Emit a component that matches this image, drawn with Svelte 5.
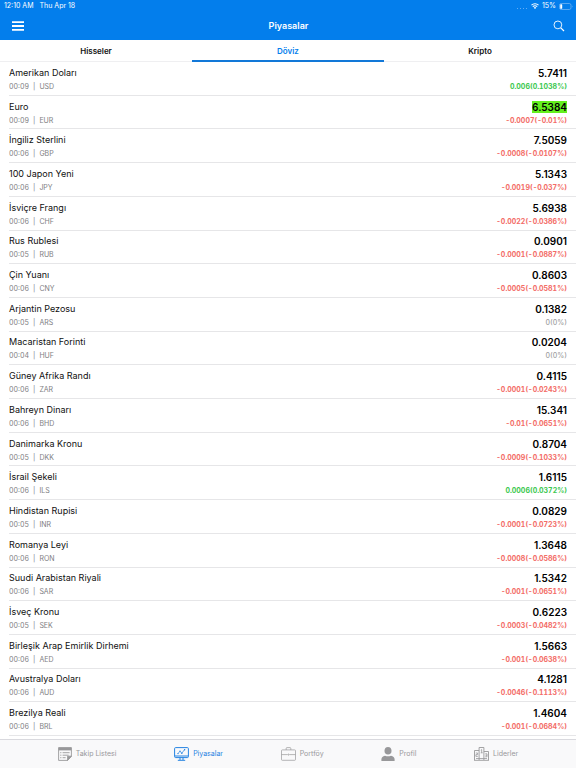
<script>
  const tabs = ['Hisseler', 'Döviz', 'Kripto'];
  let active = $state('Döviz');

  const rows = [
    ['Amerikan Doları', '00:09', 'USD', '5.7411', '0.006(0.1038%)', 'up'],
    ['Euro', '00:09', 'EUR', '6.5384', '-0.0007(-0.01%)', 'down', true],
    ['İngiliz Sterlini', '00:06', 'GBP', '7.5059', '-0.0008(-0.0107%)', 'down'],
    ['100 Japon Yeni', '00:06', 'JPY', '5.1343', '-0.0019(-0.037%)', 'down'],
    ['İsviçre Frangı', '00:06', 'CHF', '5.6938', '-0.0022(-0.0386%)', 'down'],
    ['Rus Rublesi', '00:05', 'RUB', '0.0901', '-0.0001(-0.0887%)', 'down'],
    ['Çin Yuanı', '00:06', 'CNY', '0.8603', '-0.0005(-0.0581%)', 'down'],
    ['Arjantin Pezosu', '00:05', 'ARS', '0.1382', '0(0%)', 'flat'],
    ['Macaristan Forinti', '00:04', 'HUF', '0.0204', '0(0%)', 'flat'],
    ['Güney Afrika Randı', '00:06', 'ZAR', '0.4115', '-0.0001(-0.0243%)', 'down'],
    ['Bahreyn Dinarı', '00:06', 'BHD', '15.341', '-0.01(-0.0651%)', 'down'],
    ['Danimarka Kronu', '00:05', 'DKK', '0.8704', '-0.0009(-0.1033%)', 'down'],
    ['İsrail Şekeli', '00:06', 'ILS', '1.6115', '0.0006(0.0372%)', 'up'],
    ['Hindistan Rupisi', '00:05', 'INR', '0.0829', '-0.0001(-0.0723%)', 'down'],
    ['Romanya Leyi', '00:06', 'RON', '1.3648', '-0.0008(-0.0586%)', 'down'],
    ['Suudi Arabistan Riyali', '00:06', 'SAR', '1.5342', '-0.001(-0.0651%)', 'down'],
    ['İsveç Kronu', '00:05', 'SEK', '0.6223', '-0.0003(-0.0482%)', 'down'],
    ['Birleşik Arap Emirlik Dirhemi', '00:06', 'AED', '1.5663', '-0.001(-0.0638%)', 'down'],
    ['Avustralya Doları', '00:06', 'AUD', '4.1281', '-0.0046(-0.1113%)', 'down'],
    ['Brezilya Reali', '00:06', 'BRL', '1.4604', '-0.001(-0.0684%)', 'down']
  ];
</script>

<div class="app">
  <header>
    <div class="status">
      <span>12:10 AM</span>
      <span class="date">Thu Apr 18</span>
      <span class="signal"><i></i><i></i><i></i><i></i></span>
      <svg width="8" height="6" viewBox="0 0 16 12" fill="none" stroke="#fff" stroke-width="2.2" aria-hidden="true">
        <path d="M1 4.4a10 10 0 0 1 14 0M3.6 7.2a6.2 6.2 0 0 1 8.8 0" />
        <path d="M8 12 5.5 9.4a3.6 3.6 0 0 1 5 0z" fill="#fff" stroke="none" />
      </svg>
      <span>15%</span>
      <svg width="14" height="7" viewBox="0 0 14 7" aria-hidden="true">
        <rect x=".5" y=".5" width="11.5" height="6" rx="1.7" fill="none" stroke="#7dbaf7" stroke-width=".7" />
        <rect x="1.2" y="1.2" width="2" height="4.6" rx=".6" fill="#fff" />
        <path d="M13 2.4q1 1.1 0 2.2z" fill="#7dbaf7" />
      </svg>
    </div>
    <div class="bar">
      <button aria-label="Menü">
        <svg width="12" height="10" viewBox="0 0 12 10"><path d="M0 1.2h12M0 5h12M0 8.8h12" stroke="#fff" stroke-width="1.8" /></svg>
      </button>
      <h1>Piyasalar</h1>
      <button aria-label="Ara">
        <svg width="12" height="12" viewBox="0 0 12 12" fill="none" stroke="#fff" stroke-width=".9"><circle cx="4.9" cy="4.9" r="3.9" /><path d="m7.8 7.8 3.2 3.2" stroke-width="1.2" /></svg>
      </button>
    </div>
  </header>

  <nav class="tabs">
    {#each tabs as tab}
      <button class:active={tab === active} onclick={() => (active = tab)}>{tab}</button>
    {/each}
  </nav>

  <ul>
    {#each rows as [name, time, code, price, change, dir, flash]}
      <li>
        <div class="line">
          <span class="name">{name}</span>
          <strong class:flash>{price}</strong>
        </div>
        <div class="line small">
          <span class="meta"><span>{time}</span><span>|</span><span>{code}</span></span>
          <span class="change {dir}">{change}</span>
        </div>
      </li>
    {/each}
  </ul>

  <footer>
    <a href="#takip">
      <svg width="14" height="14" viewBox="0 0 14 14" fill="none" stroke="currentColor" stroke-width=".9">
        <path d="M.6.6h12.8v8.6l-3.8 4.2h-9z" />
        <path d="M.6 2h12.8" stroke-width="2.8" />
        <path d="M2.2 5.7h1.2M4.6 5.7h7M2.2 8.2h1.2M4.6 8.2h6M2.2 10.7h1.2M4.6 10.7h3" />
        <path d="M9.6 13.4V9.2h3.8z" fill="currentColor" />
      </svg>
      Takip Listesi
    </a>
    <a href="#piyasalar" class="current">
      <svg width="15" height="14" viewBox="0 0 15 14" fill="none" stroke="currentColor" stroke-width="1">
        <rect x=".6" y=".6" width="13.8" height="10" rx="1" />
        <path d="M.6 9h13.8" />
        <path d="m4 6.600 2-2.500 1.800 2.200 2.800-3.800" stroke-width=".7" />
        <g fill="currentColor" stroke="none"><circle cx="4" cy="6.6" r=".7" /><circle cx="6" cy="4.1" r=".7" /><circle cx="7.800" cy="6.3" r=".7" /><circle cx="10.6" cy="2.7" r=".7" /></g>
        <path d="M6 10.6v2.4M9 10.6v2.4M3.8 13.3h7.4" />
      </svg>
      Piyasalar
    </a>
    <a href="#portfoy">
      <svg width="15" height="14" viewBox="0 0 15 14" fill="none" stroke="currentColor" stroke-width=".7">
        <rect x=".5" y="2.9" width="14" height="10.4" rx=".8" />
        <path d="M5.2 2.9V1.4q0-.8.8-.8h3q.8 0 .8.8v1.5M.5 7.6h6M8.5 7.6h6" />
        <circle cx="7.5" cy="7.6" r=".6" />
      </svg>
      Portföy
    </a>
    <a href="#profil">
      <svg width="14" height="14" viewBox="0 0 14 14" fill="currentColor">
        <ellipse cx="7" cy="3.8" rx="3.5" ry="3.8" />
        <path d="M.4 14v-1.8Q.6 9.5 4 8.7q3 1.2 6 0 3.4.8 3.6 3.5V14z" />
      </svg>
      Profil
    </a>
    <a href="#liderler">
      <svg width="15" height="14" viewBox="0 0 15 14" fill="none" stroke="currentColor" stroke-width=".9">
        <path d="M5.1 13V.5h4.8V13M5.1 3.5H.5V13M9.9 4.5h4.6V13M0 13.3h15" />
        <path d="M6.8 3.2l.9-.6v3.2M6.7 5.8h2M1.8 6h1.8v1.6H1.9v1.8h1.9M11.2 6.8H13v3h-1.8M11.5 8.3H13M2 11.500h11" stroke-width=".8" />
      </svg>
      Liderler
    </a>
  </footer>
</div>

<style>
  :global(body) { margin: 0; background: #fff; }
  .app {
    min-height: 100vh;
    display: flex;
    flex-direction: column;
    font-family: Inter, Roboto, "Liberation Sans", sans-serif;
    color: #111;
  }
  button {
    border: 0;
    padding: 0;
    background: none;
    font: inherit;
    color: inherit;
    cursor: pointer;
  }
  svg { display: block; flex: none; }
  header { background: #037eec; color: #fff; }
  .status {
    display: flex;
    align-items: center;
    height: 12px;
    padding: 0 3px 0 4px;
    gap: 3px;
    font-size: 7px;
    line-height: 12px;
  }
  .date { margin-left: 3px; }
  .signal { display: flex; gap: 1px; margin-left: auto; padding-top: 4px; }
  .signal i { width: 1px; height: 1px; margin-right: 1px; background: #64adf5; }
  .bar {
    display: flex;
    align-items: center;
    justify-content: space-between;
    height: 28px;
    padding: 0 11px 0 12px;
  }
  h1 { margin: 0; font-size: 9px; line-height: 12px; font-weight: 600; }
  .tabs { display: flex; height: 22px; }
  .tabs button {
    flex: 1;
    font-size: 8px;
    line-height: 20px;
    font-weight: 600;
    box-shadow: inset 0 -1px #efeff1;
  }
  .tabs .active { color: #037eec; box-shadow: inset 0 -2px #1278d8; }
  ul {
    flex: 1;
    display: grid;
    grid-auto-rows: 1fr;
    margin: 0;
    padding: 0 0 3px 9px;
    list-style: none;
  }
  li {
    display: flex;
    flex-direction: column;
    justify-content: center;
    gap: 2px;
    padding: 3px 9px 0 0;
    border-bottom: 1px solid #e6e6e8;
  }
  .line {
    display: flex;
    justify-content: space-between;
    align-items: center;
    font-size: 9px;
    line-height: 12px;
  }
  .small { font-size: 7px; line-height: 12px; font-variant-numeric: tabular-nums; }
  strong { font-size: 10px; font-weight: 600; color: #000; }
  .flash { background: #64f01e; }
  .meta { display: flex; gap: 4px; color: #7e7e82; }
  .change { font-weight: 700; }
  .up { color: #3cc850; }
  .down { color: #f36c66; }
  .flat { color: #a0a0a2; font-weight: 500; }
  footer {
    display: flex;
    justify-content: space-evenly;
    align-items: center;
    height: 28px;
    background: #f9f9fa;
    border-top: 1px solid #d9d9de;
  }
  footer a {
    display: flex;
    align-items: center;
    gap: 4px;
    font-size: 7px;
    line-height: 12px;
    color: #98989a;
    text-decoration: none;
  }
  footer .current { color: #2483e2; }
</style>
